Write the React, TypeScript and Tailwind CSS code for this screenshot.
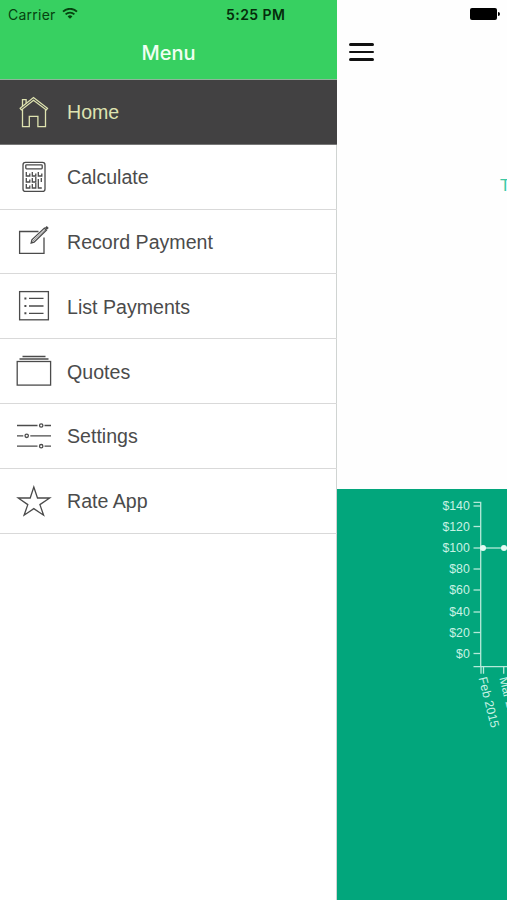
import { clsx } from 'clsx';

type IconProps = {
  children: React.ReactNode;
};

type MenuItem = {
  label: string;
  icon: React.ReactNode;
  active?: boolean;
};

const Icon = ({ children }: IconProps) => (
  <svg
    className="h-9 w-9 shrink-0"
    viewBox="0 0 36 36"
    fill="none"
    stroke="currentColor"
    strokeWidth="1.3"
  >
    {children}
  </svg>
);

const HomeIcon = () => (
  <Icon>
    <path d="M4.2 14.3 17.5 3.6l14 10.7-1.2 1.6L17.5 6.2 5.4 15.9Z" />
    <path d="M6.5 12V5.6h3.6v3.6" />
    <path d="M6.5 15.2v17.4h6.8V22.3h8.6v10.3h7.6V15.2" />
  </Icon>
);

const CalculatorIcon = () => (
  <Icon>
    <rect x="7" y="3.4" width="22" height="29" rx="2.5" />
    <rect x="9.8" y="5.8" width="16.4" height="4" rx="0.8" />
    <path d="M10.3 13v4h3.5v-2.5M16.3 13v4h3.5v-2.5M22.3 13v4h3.5v-2.5" />
    <path d="M10.3 19v4h3.5v-2.5M16.3 19v4h3.5v-5M25.3 19v4" />
    <path d="M10.3 25v4h3.5v-2.5M16.3 25v4h3.5v-5M22.3 20v9h3.5" />
  </Icon>
);

const RecordIcon = () => (
  <Icon>
    <path d="M22.5 8.5H3.6v21.8H28V14.5" />
    <path d="m15.2 20 .7-3.1L28.4 5.1l2 2.1-12.3 12Z" />
    <path d="m16.5 18.6 12.7-12" strokeWidth="0.7" />
    <path d="m29.8 3.9 2 2" strokeWidth="2.6" />
  </Icon>
);

const ListIcon = () => (
  <Icon>
    <rect x="3.6" y="3.6" width="28.8" height="28.2" />
    <path d="M13 10.4h14.5M13 18h14.5M13 25.3h14.5" />
    <path d="M8.4 10.4h2M8.4 18h2M8.4 25.3h2" strokeWidth="2" />
  </Icon>
);

const QuotesIcon = () => (
  <Icon>
    <rect x="1.2" y="8.5" width="33.4" height="23.6" />
    <path d="M3.5 6h29M6.5 3.5h23" />
  </Icon>
);

const SettingsIcon = () => (
  <Icon>
    <path d="M1 7.5h20.5M28.5 7.5H35M1 17.8h6.3M14.3 17.8H35M1 28.2h20.5M28.5 28.2H35" />
    <circle cx="25.2" cy="7.5" r="1.7" />
    <circle cx="10.7" cy="17.8" r="1.7" />
    <circle cx="25.2" cy="28.2" r="1.7" />
  </Icon>
);

const StarIcon = () => (
  <Icon>
    <path d="m17.8 4 3.7 11h12.2l-9.8 6.6 3.7 10.6-9.8-6.6-9.7 6.6 3.7-10.6L2.2 15h12Z" />
  </Icon>
);

const menuItems: MenuItem[] = [
  { label: 'Home', icon: <HomeIcon />, active: true },
  { label: 'Calculate', icon: <CalculatorIcon /> },
  { label: 'Record Payment', icon: <RecordIcon /> },
  { label: 'List Payments', icon: <ListIcon /> },
  { label: 'Quotes', icon: <QuotesIcon /> },
  { label: 'Settings', icon: <SettingsIcon /> },
  { label: 'Rate App', icon: <StarIcon /> },
];

const ticks = [
  { label: '$140', y: 17 },
  { label: '$120', y: 37.5 },
  { label: '$100', y: 59 },
  { label: '$80', y: 80 },
  { label: '$60', y: 101 },
  { label: '$40', y: 123 },
  { label: '$20', y: 143.5 },
  { label: '$0', y: 164.5 },
];

const WifiIcon = () => (
  <svg className="ml-1.5 h-3 w-4" viewBox="0 0 16 12" fill="none" stroke="currentColor">
    <path d="M1 3.6a10.2 10.2 0 0 1 14 0" strokeWidth="1.9" />
    <path d="M3.6 6.4a6.3 6.3 0 0 1 8.8 0" strokeWidth="1.8" />
    <path d="M8 10.8 5.6 8.4a3.5 3.5 0 0 1 4.8 0Z" fill="currentColor" stroke="none" />
  </svg>
);

const PaymentsChart = () => (
  <svg
    className="block h-[411px] w-[170px]"
    viewBox="0 0 170 411"
    fontFamily="Liberation Sans, Arial, sans-serif"
    fontSize="12.3"
    fill="#c9f2e4"
  >
    <g stroke="#b5ead9" strokeWidth="1.3" fill="none">
      <path d="M136.5 13.3h7.2v164.4h-7.2M143.7 177.7H170" />
      {ticks.map((tick) => (
        <path key={tick.label} d={`M136.5 ${tick.y}h7.2`} />
      ))}
      <path d="M144 177.7v7M146.5 177.7v7M166.7 177.7v7" />
      <path d="M146 59h24" />
    </g>
    <circle cx="146" cy="59" r="3" fill="#e4faf3" />
    <circle cx="167" cy="59" r="3" fill="#e4faf3" />
    {ticks.map((tick) => (
      <text key={tick.label} x="132.8" y={tick.y + 4.3} textAnchor="end">
        {tick.label}
      </text>
    ))}
    <text transform="translate(141.5 189) rotate(76)">Feb 2015</text>
    <text transform="translate(162.2 189) rotate(76)">Mar 2015</text>
  </svg>
);

const Sidebar = () => (
  <aside className="flex w-[337px] shrink-0 flex-col border-r border-[#d0d4d2] bg-white">
    <header className="-mr-px flex h-20 flex-col border-b border-[#8fb59b] bg-[#37d061] font-['Inter',sans-serif]">
      <div className="flex h-7 items-center pl-2 text-[14px] text-[#06420f]">
        <span className="w-12 tracking-[0.25px] whitespace-nowrap">Carrier</span>
        <WifiIcon />
        <span className="ml-[148px] font-semibold tracking-[0.45px] whitespace-nowrap text-[#052c0b]">
          5:25 PM
        </span>
      </div>
      <h1 className="mt-[11px] text-center text-[20px] leading-7 font-medium text-[#f0fff3]">
        Menu
      </h1>
    </header>
    <nav className="-mr-px">
      {menuItems.map(({ label, icon, active }) => (
        <a
          key={label}
          className={clsx(
            'flex h-[64.8px] items-center gap-[15px] border-b pl-4 text-[19.6px]',
            active
              ? 'border-[#777] bg-[#424142] text-[#dfe3b0]'
              : 'border-[#d9d9d9] text-[#4b4b4b]'
          )}
        >
          {icon}
          <span className="pt-[2.5px]">{label}</span>
        </a>
      ))}
    </nav>
  </aside>
);

const App = () => (
  <div className="flex h-[900px] w-[507px] overflow-hidden bg-[#fefefe] font-['Liberation_Sans',Arial,sans-serif]">
    <Sidebar />
    <main className="flex w-[170px] flex-col overflow-hidden">
      <div className="flex h-7 items-center justify-end pr-[7px]">
        <div className="h-3 w-[27px] rounded-[2px] bg-black" />
        <div className="ml-px h-1 w-0.5 rounded-r bg-black" />
      </div>
      <button className="mt-[15px] ml-3 flex w-[25px] flex-col gap-[5px]">
        <span className="h-[2.5px] w-full rounded bg-[#111]" />
        <span className="h-[2.5px] w-full rounded bg-[#111]" />
        <span className="h-[2.5px] w-full rounded bg-[#111]" />
      </button>
      <p className="mt-[115px] ml-[163px] text-[17px] leading-5 whitespace-nowrap text-[#3cc8a4]">
        Total
      </p>
      <section className="mt-auto bg-[#02a67c]">
        <PaymentsChart />
      </section>
    </main>
  </div>
);

export default App;
